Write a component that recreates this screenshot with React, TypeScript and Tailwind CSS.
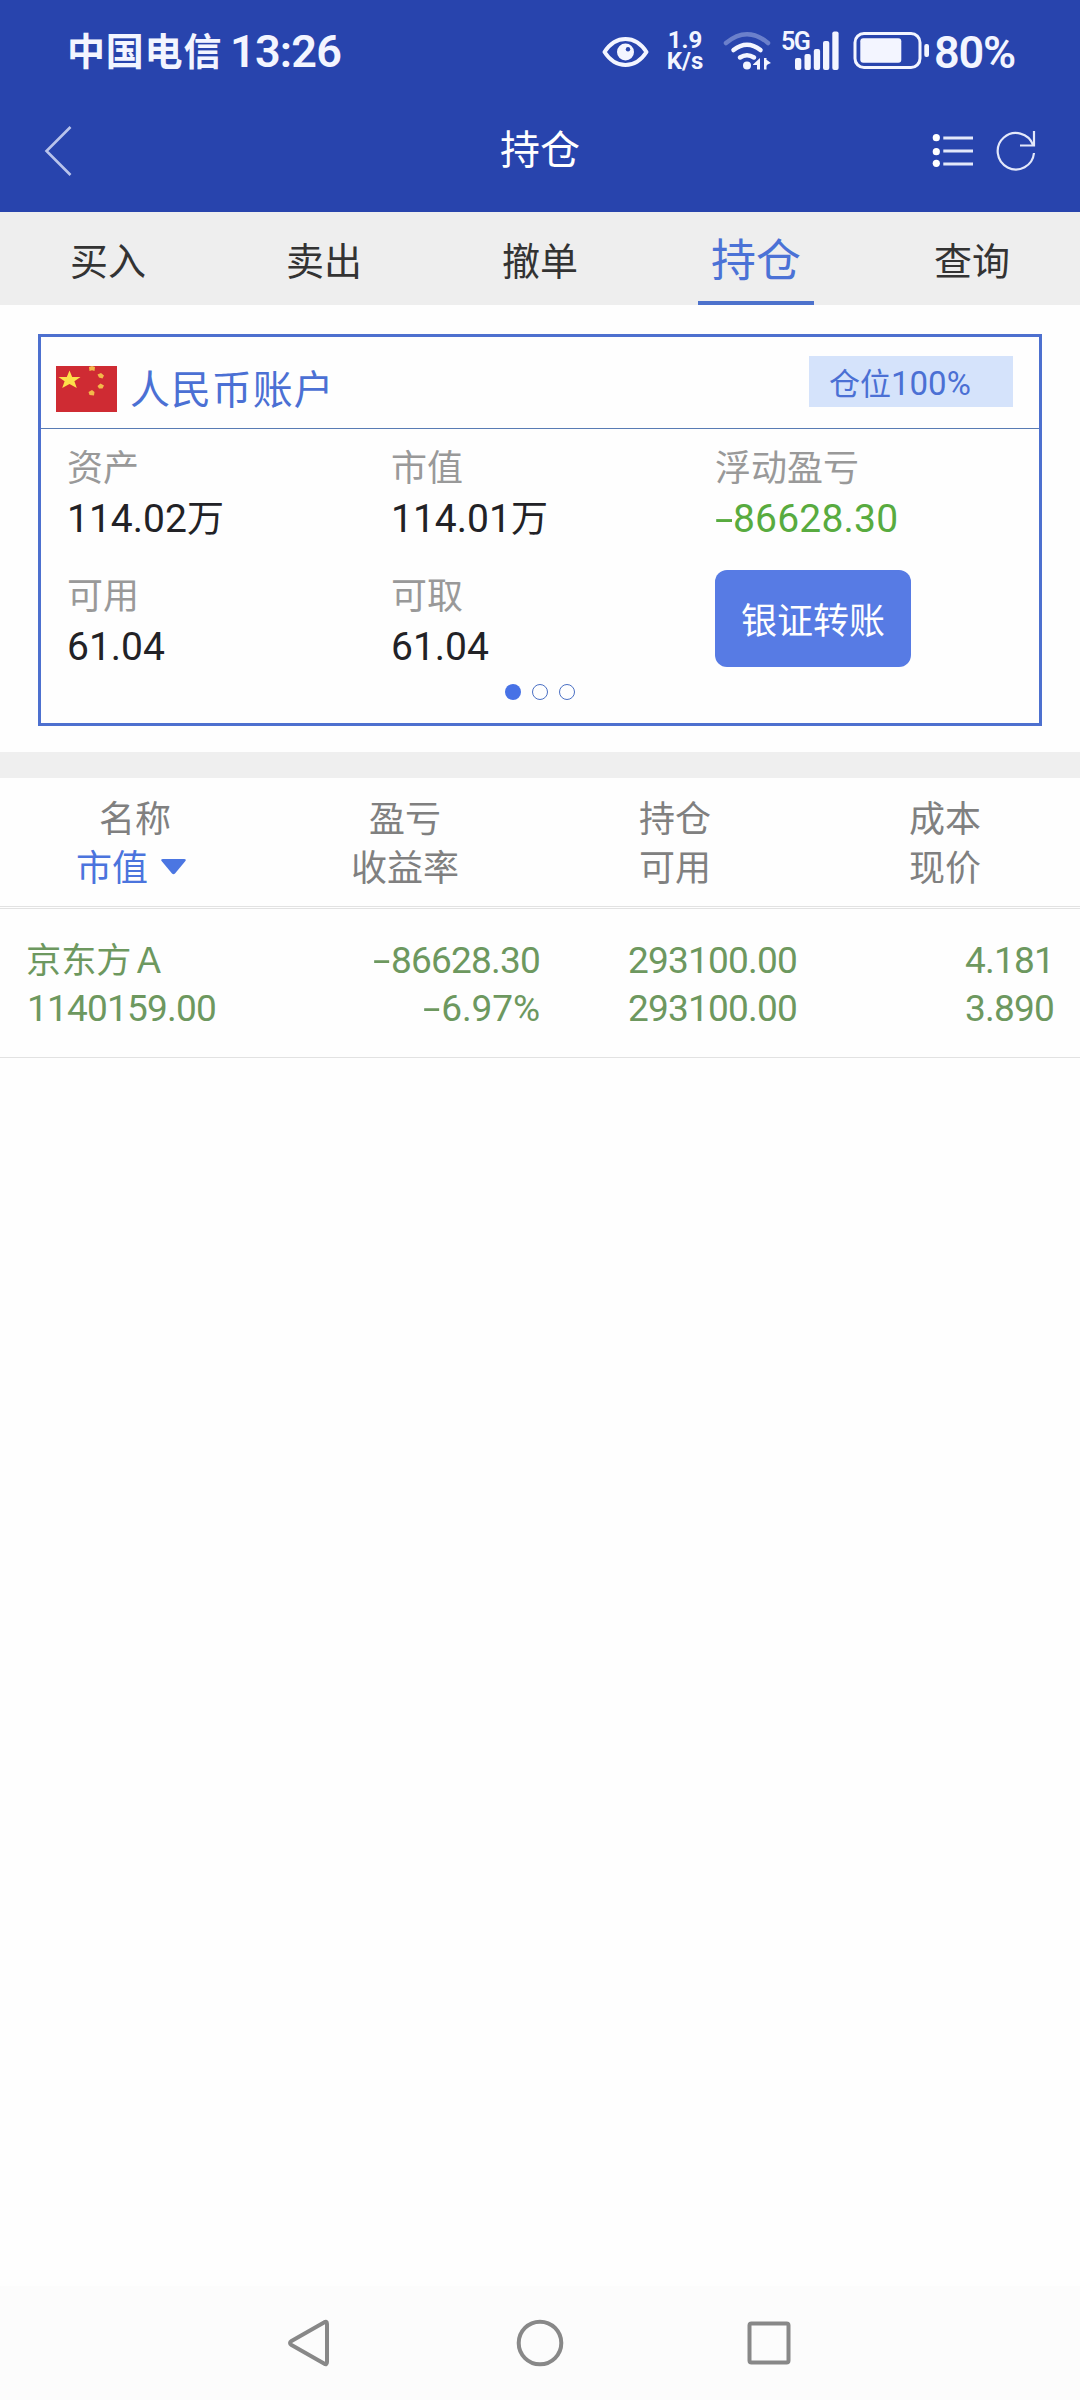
import type { ReactNode } from "react"

const tabs = ["买入", "卖出", "撤单", "持仓", "查询"]

const columns = [
    ["名称", "市值"],
    ["盈亏", "收益率"],
    ["持仓", "可用"],
    ["成本", "现价"],
]

function Minus() {
    return <span className="inline-block w-[18px] origin-left scale-x-[1.7] text-left">-</span>
}

function StatusBar() {
    return (
        <div className="flex h-[88px] items-start pt-[30px] pl-[67px] text-[#f3f5ff]">
            <div className="flex h-[42px] w-[535px] items-center font-bold">
                <span className="w-[163px] pt-[2px] text-[38px] leading-[42px] tracking-[0.8px]">中国电信</span>
                <span className="pt-[2px] text-[45px] leading-[42px] font-semibold tracking-[-0.8px]">13:26</span>
            </div>
            <svg className="h-[42px] w-[48px]" viewBox="602 30 48 42" fill="none">
                <path d="M604.5 52C610 43.500 617 39 625.500 39S641 43.500 646.500 52C641 60.500 634 65 625.500 65S610 60.500 604.500 52Z" stroke="#f3f5ff" strokeWidth="4" strokeLinejoin="round" />
                <circle cx="625.500" cy="52" r="8.500" fill="#f3f5ff" />
                <circle cx="628" cy="49.300" r="2.200" fill="#2844ad" />
            </svg>
            <div className="ml-[12px] flex h-[42px] w-[46px] flex-col items-center text-[24px] leading-[21px] font-bold">
                <span>1.9</span>
                <span>K/s</span>
            </div>
            <svg className="ml-[14px] h-[42px] w-[50px]" viewBox="722 30 50 42" fill="none" strokeLinecap="round">
                <path d="M726 43Q747 25.500 768 43" stroke="#6b80cb" strokeWidth="4.500" />
                <path d="M733.500 50Q747 39.500 760.500 50" stroke="#f3f5ff" strokeWidth="4.500" />
                <path d="M740 57.500Q747 53 754 57.500" stroke="#f3f5ff" strokeWidth="4.500" />
                <circle cx="747" cy="65.500" r="4" fill="#f3f5ff" />
                <path d="M753 64.500L760 58V69.500H757V65H753ZM764 58L771 63L767.500 64.500L764 69.500ZM764 58H766.500V69.500H764Z" fill="#f3f5ff" />
            </svg>
            <div className="relative ml-[9px] h-[42px] w-[59px]">
                <span className="absolute top-0 left-0 text-[25px] leading-[24px] font-semibold tracking-[-1.5px]">5G</span>
                <svg className="h-[42px] w-[59px]" viewBox="781 30 59 42" fill="#f3f5ff">
                    <rect x="795" y="58" width="6.300" height="12" rx="2" />
                    <rect x="804.500" y="54" width="6.300" height="16" rx="2" />
                    <rect x="813.800" y="49" width="6.300" height="21" rx="2" />
                    <rect x="823" y="41" width="6.300" height="29" rx="2" />
                    <rect x="832.300" y="31.500" width="6.300" height="38.500" rx="2" />
                </svg>
            </div>
            <svg className="ml-[12px] h-[42px] w-[78px]" viewBox="852 30 78 42" fill="none">
                <rect x="855" y="33.500" width="65" height="34" rx="9" stroke="#f3f5ff" strokeWidth="3" />
                <rect x="860.300" y="38.300" width="41" height="24.500" rx="3" fill="#f3f5ff" />
                <rect x="924.300" y="44" width="4.700" height="13" rx="2" fill="#f3f5ff" />
            </svg>
            <span className="ml-[4px] pt-px text-[45px] leading-[43px] font-semibold tracking-[-1.2px]">80%</span>
        </div>
    )
}

function TitleBar() {
    return (
        <div className="grid h-[124px] grid-cols-3 items-center pt-px">
            <svg className="ml-[42px] h-[52px] w-[32px]" viewBox="42 125 32 52" fill="none" stroke="#b9c4ec" strokeWidth="2.600">
                <path d="M70.500 127L46.500 151L70.500 175" />
            </svg>
            <h1 className="text-center text-[40px] leading-[44px] font-normal text-white">持仓</h1>
            <div className="flex justify-end pr-[42px]">
                <svg className="h-[44px] w-[108px]" viewBox="930 129 108 44" fill="none" stroke="#e3e8fa" strokeWidth="2.600">
                    <path d="M943.300 138H973M943.300 151H973M943.300 164H973" strokeWidth="3" />
                    <g fill="#fff" stroke="none">
                        <circle cx="936.300" cy="137.700" r="3.600" />
                        <circle cx="936.300" cy="151.700" r="3.600" />
                        <circle cx="936.300" cy="163.300" r="3.600" />
                    </g>
                    <path d="M1034 153A18.200 18.200 0 1 1 1033 145M1034 131V145.500H1020" strokeWidth="2.200" />
                </svg>
            </div>
        </div>
    )
}

function Flag() {
    return (
        <svg className="h-[46px] w-[61px]" viewBox="0 0 61 46">
            <rect width="61" height="46" fill="#cf2b33" />
            <path d="M13.500 4.500L16.200 11H24.500L18.400 15.200L20.800 22L13.500 18L6.200 22L8.600 15.200L2.500 11H10.800Z" fill="#fde04a" />
            <g fill="#f3b94a">
                <path d="M33 1L36 0L39 1L38.500 5L36 4.300L33.500 5Z" />
                <path d="M41.500 8.500L45 7L48 9.500L46.500 12.500L43 11.500Z" />
                <path d="M41.500 20L44.500 17.500L48 19.500L46.500 22.500L43 22.500Z" />
                <path d="M32.500 26L36 24L38.500 26L38 29.500L33.500 29Z" />
            </g>
        </svg>
    )
}

function Field({ label, children, green }: { label: string, children: ReactNode, green?: boolean }) {
    return (
        <div className="flex flex-col">
            <span className="text-[36px] leading-[49px] text-[#999]">{label}</span>
            <span className={green ? "text-[39px] leading-[50px] tracking-[0.2px] text-[#58ab3f]" : "text-[39px] leading-[50px] text-[#222226]"}>{children}</span>
        </div>
    )
}

function AccountCard() {
    return (
        <section className="mx-[38px] mt-[29px] flex h-[392px] flex-col border-[3px] border-[#4d70cf]">
            <div className="flex h-[92px] shrink-0 border-b border-[#587bb4] pl-[15px]">
                <div className="mt-[29px]"><Flag /></div>
                <h2 className="mt-[29px] ml-[13px] text-[40px] leading-[50px] tracking-[0.9px] text-[#4b70d4]">人民币账户</h2>
                <div className="mt-[19px] mr-[26px] ml-auto h-[51px] w-[204px] bg-[#d5e3fb] pl-[20px] text-[31px] leading-[55px] text-[#4b70d4]">
                    仓位<span className="text-[33px]">100%</span>
                </div>
            </div>
            <div className="grid grid-cols-[324px_324px_1fr] pt-[16px] pl-[26px]">
                <Field label="资产">114.02<span className="text-[37px]">万</span></Field>
                <Field label="市值">114.01<span className="text-[37px]">万</span></Field>
                <Field label="浮动盈亏" green><Minus />86628.30</Field>
                <div className="pt-[28px]"><Field label="可用">61.04</Field></div>
                <div className="pt-[28px]"><Field label="可取">61.04</Field></div>
                <button className="mt-[25px] h-[97px] w-[196px] rounded-[12px] bg-[#577be4] pt-[7px] text-[36px] leading-[50px] text-white">银证转账</button>
            </div>
            <div className="mt-[12px] flex justify-center gap-[11px]">
                <span className="h-4 w-4 rounded-full bg-[#4772e6]"></span>
                <span className="h-4 w-4 rounded-full border border-[#4b70c4]"></span>
                <span className="h-4 w-4 rounded-full border border-[#4b70c4]"></span>
            </div>
        </section>
    )
}

function Holdings() {
    return (
        <section>
            <div className="grid h-[129px] grid-cols-4 border-b border-[#e2e2e2] pt-[18px] text-center text-[36px] leading-[49px] text-[#808080]">
                {columns.map(([top, bottom]) => (
                    <div key={top} className="flex flex-col">
                        <span>{top}</span>
                        {bottom == "市值" ? (
                            <span className="flex items-center pl-[76px] text-[#4b74dd]">
                                {bottom}
                                <svg className="mb-[5px] ml-[13px] h-4 w-[25px]" viewBox="0 0 25 16">
                                    <path d="M2 0H23Q26 0 24 2.500L14 14.500Q12.500 16 11 14.500L1 2.500Q-1 0 2 0Z" fill="#4b76e2" />
                                </svg>
                            </span>
                        ) : <span>{bottom}</span>}
                    </div>
                ))}
            </div>
            <div className="mt-[1px] grid h-[150px] grid-cols-[270px_270px_257px_257px] border-y border-[#e2e2e2] pt-[28px] text-right text-[37px] leading-[48px] tracking-[-0.8px] text-[#6d985f]">
                <div className="flex flex-col pl-[26px] text-left">
                    <span className="text-[35.2px] tracking-normal">京东方Ａ</span>
                    <span className="pl-px">1140159.00</span>
                </div>
                <div className="flex flex-col"><span><Minus />86628.30</span><span className="tracking-[-0.1px]"><Minus />6.97%</span></div>
                <div className="flex flex-col"><span>293100.00</span><span>293100.00</span></div>
                <div className="flex flex-col"><span>4.181</span><span>3.890</span></div>
            </div>
        </section>
    )
}

export default function App() {
    return (
        <main className="flex h-[2400px] w-[1080px] flex-col overflow-hidden bg-[#fefefe] font-[Roboto,'Noto_Sans_CJK_SC',sans-serif]">
            <header className="h-[212px] shrink-0 bg-[#2844ad]">
                <StatusBar />
                <TitleBar />
            </header>
            <nav className="grid h-[93px] shrink-0 grid-cols-5 bg-[#eee] text-center text-[38px] leading-[100px] text-[#333]">
                {tabs.map((tab) => tab == "持仓" ? (
                    <div key={tab} className="mx-auto h-[93px] w-[116px] border-b-4 border-[#4d72cc] text-[45px] text-[#4b72d6]">{tab}</div>
                ) : (
                    <div key={tab}>{tab}</div>
                ))}
            </nav>
            <AccountCard />
            <div className="mt-[26px] h-[26px] shrink-0 bg-[#efefef]"></div>
            <Holdings />
            <footer className="mt-auto flex h-[114px] items-center justify-center bg-[#fcfcfc]">
                <svg className="h-[50px] w-[506px]" viewBox="287 2318 506 50" fill="none" stroke="#888" strokeWidth="4" strokeLinejoin="round">
                    <path d="M324 2322.500Q327 2320.500 327 2324V2362Q327 2365.500 324 2363.500L291.500 2345Q288.500 2343 291.500 2341Z" />
                    <circle cx="540" cy="2343" r="21.300" />
                    <rect x="749.500" y="2323.500" width="39" height="39" rx="2" />
                </svg>
            </footer>
        </main>
    )
}
